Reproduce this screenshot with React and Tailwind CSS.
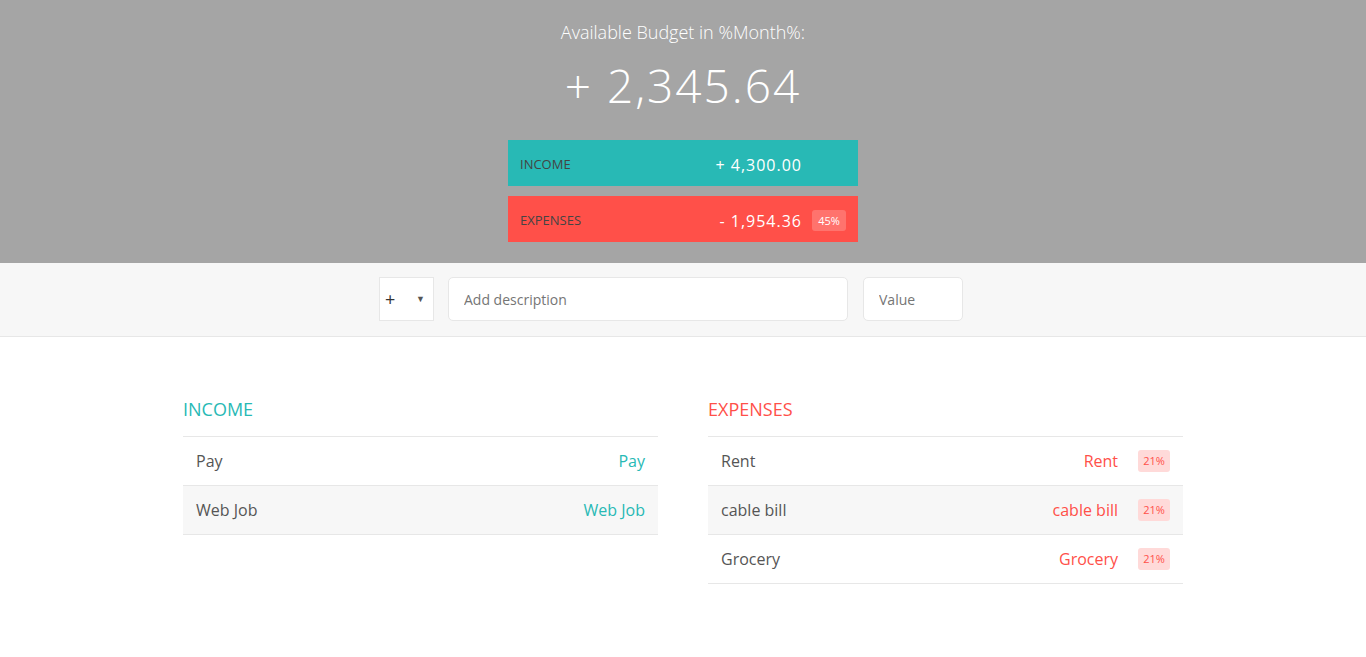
import React from 'react';

const incomes = [
  { id: 0, description: 'Pay', value: 'Pay' },
  { id: 1, description: 'Web Job', value: 'Web Job' },
];

const expenses = [
  { id: 0, description: 'Rent', value: 'Rent', percentage: '21%' },
  { id: 1, description: 'cable bill', value: 'cable bill', percentage: '21%' },
  { id: 2, description: 'Grocery', value: 'Grocery', percentage: '21%' },
];

export default function App() {
  return (
    <div className="min-h-[657px] bg-white text-[#555] font-['Open_Sans',sans-serif]">
      {/* Top budget panel */}
      <div className="h-[263px] bg-[#a5a5a5] flex items-center justify-center pb-[2px]">
        <div className="w-[350px] text-white">
          <div className="text-[18px] leading-[24px] font-light text-center mb-[10px]">
            Available Budget in <span>%Month%</span>:
          </div>
          <div className="text-[46px] leading-[62px] font-light text-center tracking-[2px] mb-[24px]">
            + 2,345.64
          </div>

          <div className="bg-[#28B9B5] px-[12px] pt-[14px] pb-[10px] mb-[10px] flex items-center uppercase h-[46px]">
            <div className="text-[13px] text-[#444]">Income</div>
            <div className="ml-auto flex items-center">
              <div className="text-[16px] tracking-[1px]">+ 4,300.00</div>
              <div className="w-[34px] ml-[10px] text-[11px] py-[3px]">&nbsp;</div>
            </div>
          </div>

          <div className="bg-[#FF5049] px-[12px] pt-[14px] pb-[10px] flex items-center uppercase h-[46px]">
            <div className="text-[13px] text-[#444]">Expenses</div>
            <div className="ml-auto flex items-center">
              <div className="text-[16px] tracking-[1px]">- 1,954.36</div>
              <div className="w-[34px] ml-[10px] text-[11px] py-[3px] leading-[15px] rounded-[3px] text-center bg-white/20">
                45%
              </div>
            </div>
          </div>
        </div>
      </div>

      {/* Add item bar */}
      <div className="bg-[#f7f7f7] border-b border-[#e7e7e7] pt-[14px] pb-[15px] flex justify-center pr-[24px]">
        <div className="w-[55px] h-[44px] bg-white border border-[#e7e7e7] flex items-center justify-between pl-[5px] pr-[8px] text-[#333]">
          <span className="text-[18px] leading-none">+</span>
          <span className="text-[9px] text-[#555]">▼</span>
        </div>
        <input
          type="text"
          placeholder="Add description"
          className="ml-[14px] w-[400px] h-[44px] bg-white border border-[#e7e7e7] rounded-[5px] px-[15px] text-[14px] placeholder:text-[#757575] outline-none"
        />
        <input
          type="text"
          placeholder="Value"
          className="ml-[15px] w-[100px] h-[44px] bg-white border border-[#e7e7e7] rounded-[5px] px-[15px] text-[14px] placeholder:text-[#757575] outline-none"
        />
      </div>

      {/* Lists */}
      <div className="w-[1000px] mx-auto mt-[60px] flex justify-between">
        <div className="w-[475px]">
          <h2 className="text-[18px] leading-[24px] uppercase text-[#28B9B5] mb-[15px]">Income</h2>
          <div className="border-t border-[#e7e7e7]">
            {incomes.map((item, i) => (
              <div
                key={item.id}
                className={`flex items-center justify-between px-[13px] py-[13px] border-b border-[#e7e7e7] text-[16px] leading-[22px] ${i % 2 === 1 ? 'bg-[#f7f7f7]' : ''}`}
              >
                <div>{item.description}</div>
                <div className="text-[#28B9B5]">{item.value}</div>
              </div>
            ))}
          </div>
        </div>

        <div className="w-[475px]">
          <h2 className="text-[18px] leading-[24px] uppercase text-[#FF5049] mb-[15px]">Expenses</h2>
          <div className="border-t border-[#e7e7e7]">
            {expenses.map((item, i) => (
              <div
                key={item.id}
                className={`flex items-center px-[13px] py-[13px] border-b border-[#e7e7e7] text-[16px] leading-[22px] ${i % 2 === 1 ? 'bg-[#f7f7f7]' : ''}`}
              >
                <div>{item.description}</div>
                <div className="ml-auto text-[#FF5049]">{item.value}</div>
                <div className="ml-[20px] w-[32px] text-[11px] leading-[16px] py-[3px] rounded-[3px] text-center bg-[#FFDAD9] text-[#FF5049]">
                  {item.percentage}
                </div>
              </div>
            ))}
          </div>
        </div>
      </div>
    </div>
  );
}
